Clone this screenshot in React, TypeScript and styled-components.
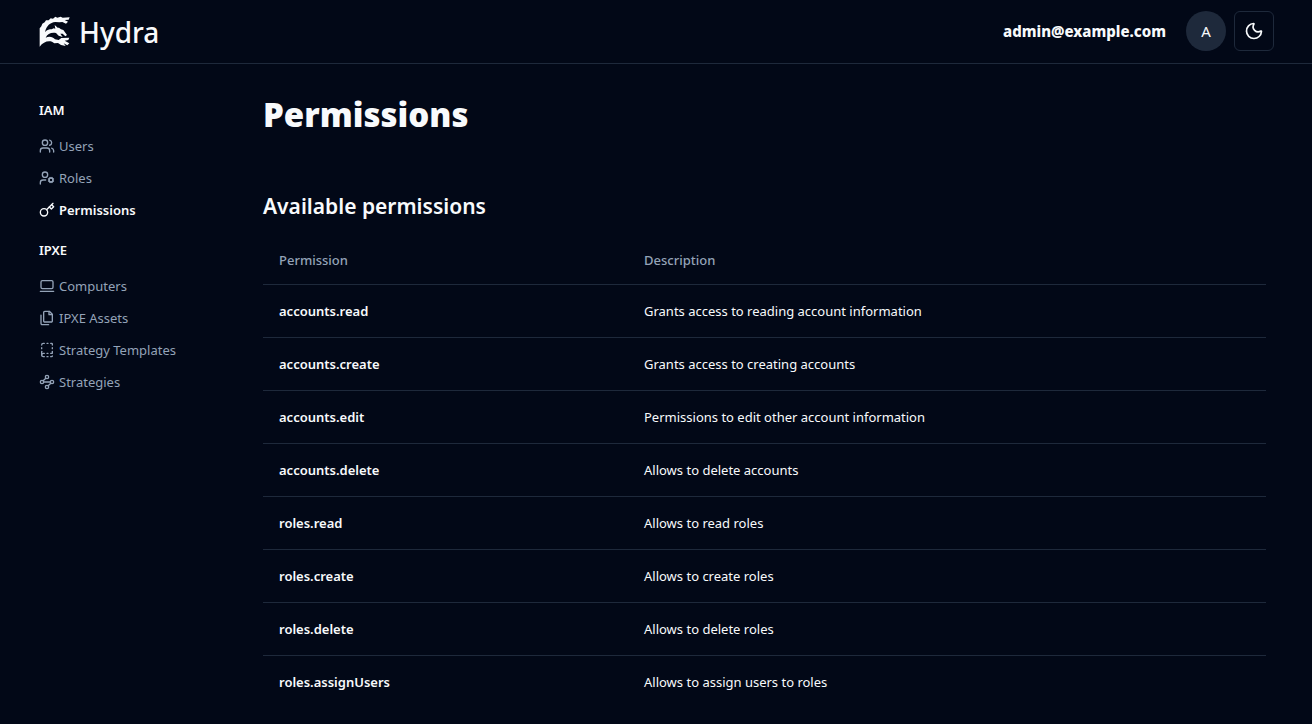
import React from "react";
import styled, { createGlobalStyle } from "styled-components";
import {
  Users,
  UserCog,
  LaptopMinimal,
  BookDashed,
  Moon,
} from "lucide-react";

const color = {
  background: "#020817",
  foreground: "#f8fafc",
  muted: "#94a3b8",
  border: "#1e293b",
};

const GlobalStyle = createGlobalStyle`
  *, *::before, *::after { box-sizing: border-box; }
  body {
    margin: 0;
    background: ${color.background};
    color: ${color.foreground};
    font-family: "Segoe UI", "Noto Sans", "Open Sans", sans-serif;
    font-size: 13px;
    line-height: 20px;
  }
  h1, h2, h3, ul { margin: 0; padding: 0; }
  ul { list-style: none; }
`;

const Page = styled.div`
  display: flex;
  flex-direction: column;
  min-height: 100vh;
`;

const Header = styled.header`
  display: flex;
  align-items: center;
  justify-content: space-between;
  height: 64px;
  padding: 0 38px 2px 39px;
  border-bottom: 1px solid ${color.border};
`;

const Brand = styled.a`
  display: flex;
  align-items: center;
  gap: 8px;
  color: inherit;
  text-decoration: none;
`;

const Wordmark = styled.span`
  padding-top: 2px;
  font-size: 28px;
  font-weight: 500;
  line-height: 36px;
`;

const Account = styled.div`
  display: flex;
  align-items: center;
  gap: 8px;
`;

const Email = styled.span`
  margin-right: 12px;
  font-size: 15px;
  font-weight: 800;
  line-height: 24px;
`;

const Avatar = styled.button`
  width: 40px;
  height: 40px;
  padding: 0;
  border: 0;
  border-radius: 50%;
  background: ${color.border};
  color: inherit;
  font: inherit;
  font-size: 15px;
`;

const ThemeButton = styled.button`
  display: flex;
  align-items: center;
  justify-content: center;
  width: 40px;
  height: 40px;
  padding: 0;
  border: 1px solid ${color.border};
  border-radius: 6px;
  background: transparent;
  color: inherit;
`;

const Body = styled.div`
  display: grid;
  grid-template-columns: 200px minmax(0, 1fr);
  gap: 24px;
  padding: 32px 46px 0 39px;
`;

const Sidebar = styled.nav`
  display: flex;
  flex-direction: column;
  gap: 10px;
`;

const GroupTitle = styled.h3`
  padding: 4px 0;
  margin-bottom: 6px;
  font-size: 13px;
  font-weight: 600;
  line-height: 20px;
`;

const NavLink = styled.a<{ $active?: boolean }>`
  display: flex;
  align-items: center;
  gap: 4px;
  padding: 6px 0;
  color: ${({ $active }) => ($active ? color.foreground : color.muted)};
  font-weight: ${({ $active }) => ($active ? 600 : 400)};
  text-decoration: none;
`;

const Title = styled.h1`
  font-size: 33px;
  font-weight: 900;
  line-height: 38px;
`;

const Subtitle = styled.h2`
  margin: 56px 0 14px;
  font-size: 21px;
  font-weight: 600;
  line-height: 32px;
`;

const Table = styled.table`
  width: 100%;
  border-collapse: collapse;
  table-layout: fixed;
`;

const HeadCell = styled.th<{ $width?: string }>`
  width: ${({ $width }) => $width ?? "auto"};
  height: 48px;
  padding: 0 16px;
  border-bottom: 1px solid ${color.border};
  color: ${color.muted};
  font-weight: 500;
  text-align: left;
`;

const Cell = styled.td<{ $strong?: boolean }>`
  padding: 16px;
  font-weight: ${({ $strong }) => ($strong ? 600 : 400)};

  tr:not(:last-child) > & {
    border-bottom: 1px solid ${color.border};
  }
`;

const LineIcon = styled.svg.attrs({
  width: 16,
  height: 16,
  viewBox: "0 0 24 24",
  fill: "none",
  stroke: "currentColor",
  strokeWidth: 2,
  strokeLinecap: "round",
  strokeLinejoin: "round",
  "aria-hidden": true,
})`
  flex: none;
`;

const KeyIcon = () => (
  <LineIcon>
    <circle cx="7.5" cy="15.5" r="5.5" />
    <path d="m21 2-9.6 9.6" />
    <path d="m15.5 7.5 3 3L22 7l-3-3" />
  </LineIcon>
);

const FilesIcon = () => (
  <LineIcon>
    <path d="M15.5 2H8.6c-.4 0-.8.2-1.1.5-.3.3-.5.7-.5 1.1v12.8c0 .4.2.8.5 1.1.3.3.7.5 1.1.5h9.8c.4 0 .8-.2 1.1-.5.3-.3.5-.7.5-1.1V6.5L15.5 2z" />
    <path d="M3 7.6v12.8c0 .4.2.8.5 1.1.3.3.7.5 1.1.5h9.8" />
    <path d="M15 2v5h5" />
  </LineIcon>
);

const WaypointsIcon = () => (
  <LineIcon>
    <circle cx="12" cy="4.5" r="2.5" />
    <path d="m10.2 6.3-3.9 3.9" />
    <circle cx="4.5" cy="12" r="2.5" />
    <path d="M7 12h10" />
    <circle cx="19.5" cy="12" r="2.5" />
    <path d="m13.8 17.7 3.9-3.9" />
    <circle cx="12" cy="19.5" r="2.5" />
  </LineIcon>
);

type NavItem = { label: string; icon: React.ReactNode; active?: boolean };

const groups: { title: string; items: NavItem[] }[] = [
  {
    title: "IAM",
    items: [
      { label: "Users", icon: <Users size={16} /> },
      { label: "Roles", icon: <UserCog size={16} /> },
      { label: "Permissions", icon: <KeyIcon />, active: true },
    ],
  },
  {
    title: "IPXE",
    items: [
      { label: "Computers", icon: <LaptopMinimal size={16} /> },
      { label: "IPXE Assets", icon: <FilesIcon /> },
      { label: "Strategy Templates", icon: <BookDashed size={16} /> },
      { label: "Strategies", icon: <WaypointsIcon /> },
    ],
  },
];

const permissions = [
  ["accounts.read", "Grants access to reading account information"],
  ["accounts.create", "Grants access to creating accounts"],
  ["accounts.edit", "Permissions to edit other account information"],
  ["accounts.delete", "Allows to delete accounts"],
  ["roles.read", "Allows to read roles"],
  ["roles.create", "Allows to create roles"],
  ["roles.delete", "Allows to delete roles"],
  ["roles.assignUsers", "Allows to assign users to roles"],
];

function HydraLogo() {
  return (
    <svg width="32" height="32" viewBox="0 0 96 96" fill="currentColor" aria-hidden="true">
      <path d="M2 95V40L7 34L10 26L17 22L21 16L29 16L35 10L42 11L49 5L55 8L65 5L71 8L92 7L89 14L77 15L87 20L81 26L70 21L61 22L49 21C33 23 23 32 18 51C25 44 31 43 38 43L44 40L49 41L47 30L56 38L60 38L66 43L73 45L84 60L79 64L71 56L64 56L71 66L59 62L51 54C38 51 25 56 20 68C31 63 42 66 48 73L59 75L67 69L91 68L88 75L77 77L91 85L85 91L74 85L80 93L66 90L57 84L46 85L39 80C25 76 12 82 2 95Z" />
    </svg>
  );
}

export default function App() {
  return (
    <Page>
      <GlobalStyle />
      <Header>
        <Brand href="#">
          <HydraLogo />
          <Wordmark>Hydra</Wordmark>
        </Brand>
        <Account>
          <Email>admin@example.com</Email>
          <Avatar type="button">A</Avatar>
          <ThemeButton type="button" aria-label="Toggle theme">
            <Moon size={20} />
          </ThemeButton>
        </Account>
      </Header>
      <Body>
        <Sidebar>
          {groups.map((group) => (
            <section key={group.title}>
              <GroupTitle>{group.title}</GroupTitle>
              <ul>
                {group.items.map(({ label, icon, active }) => (
                  <li key={label}>
                    <NavLink href="#" $active={active} aria-current={active ? "page" : undefined}>
                      {icon}
                      {label}
                    </NavLink>
                  </li>
                ))}
              </ul>
            </section>
          ))}
        </Sidebar>
        <main>
          <Title>Permissions</Title>
          <Subtitle>Available permissions</Subtitle>
          <Table>
            <thead>
              <tr>
                <HeadCell scope="col" $width="365px">Permission</HeadCell>
                <HeadCell scope="col">Description</HeadCell>
              </tr>
            </thead>
            <tbody>
              {permissions.map(([name, description]) => (
                <tr key={name}>
                  <Cell $strong>{name}</Cell>
                  <Cell>{description}</Cell>
                </tr>
              ))}
            </tbody>
          </Table>
        </main>
      </Body>
    </Page>
  );
}
